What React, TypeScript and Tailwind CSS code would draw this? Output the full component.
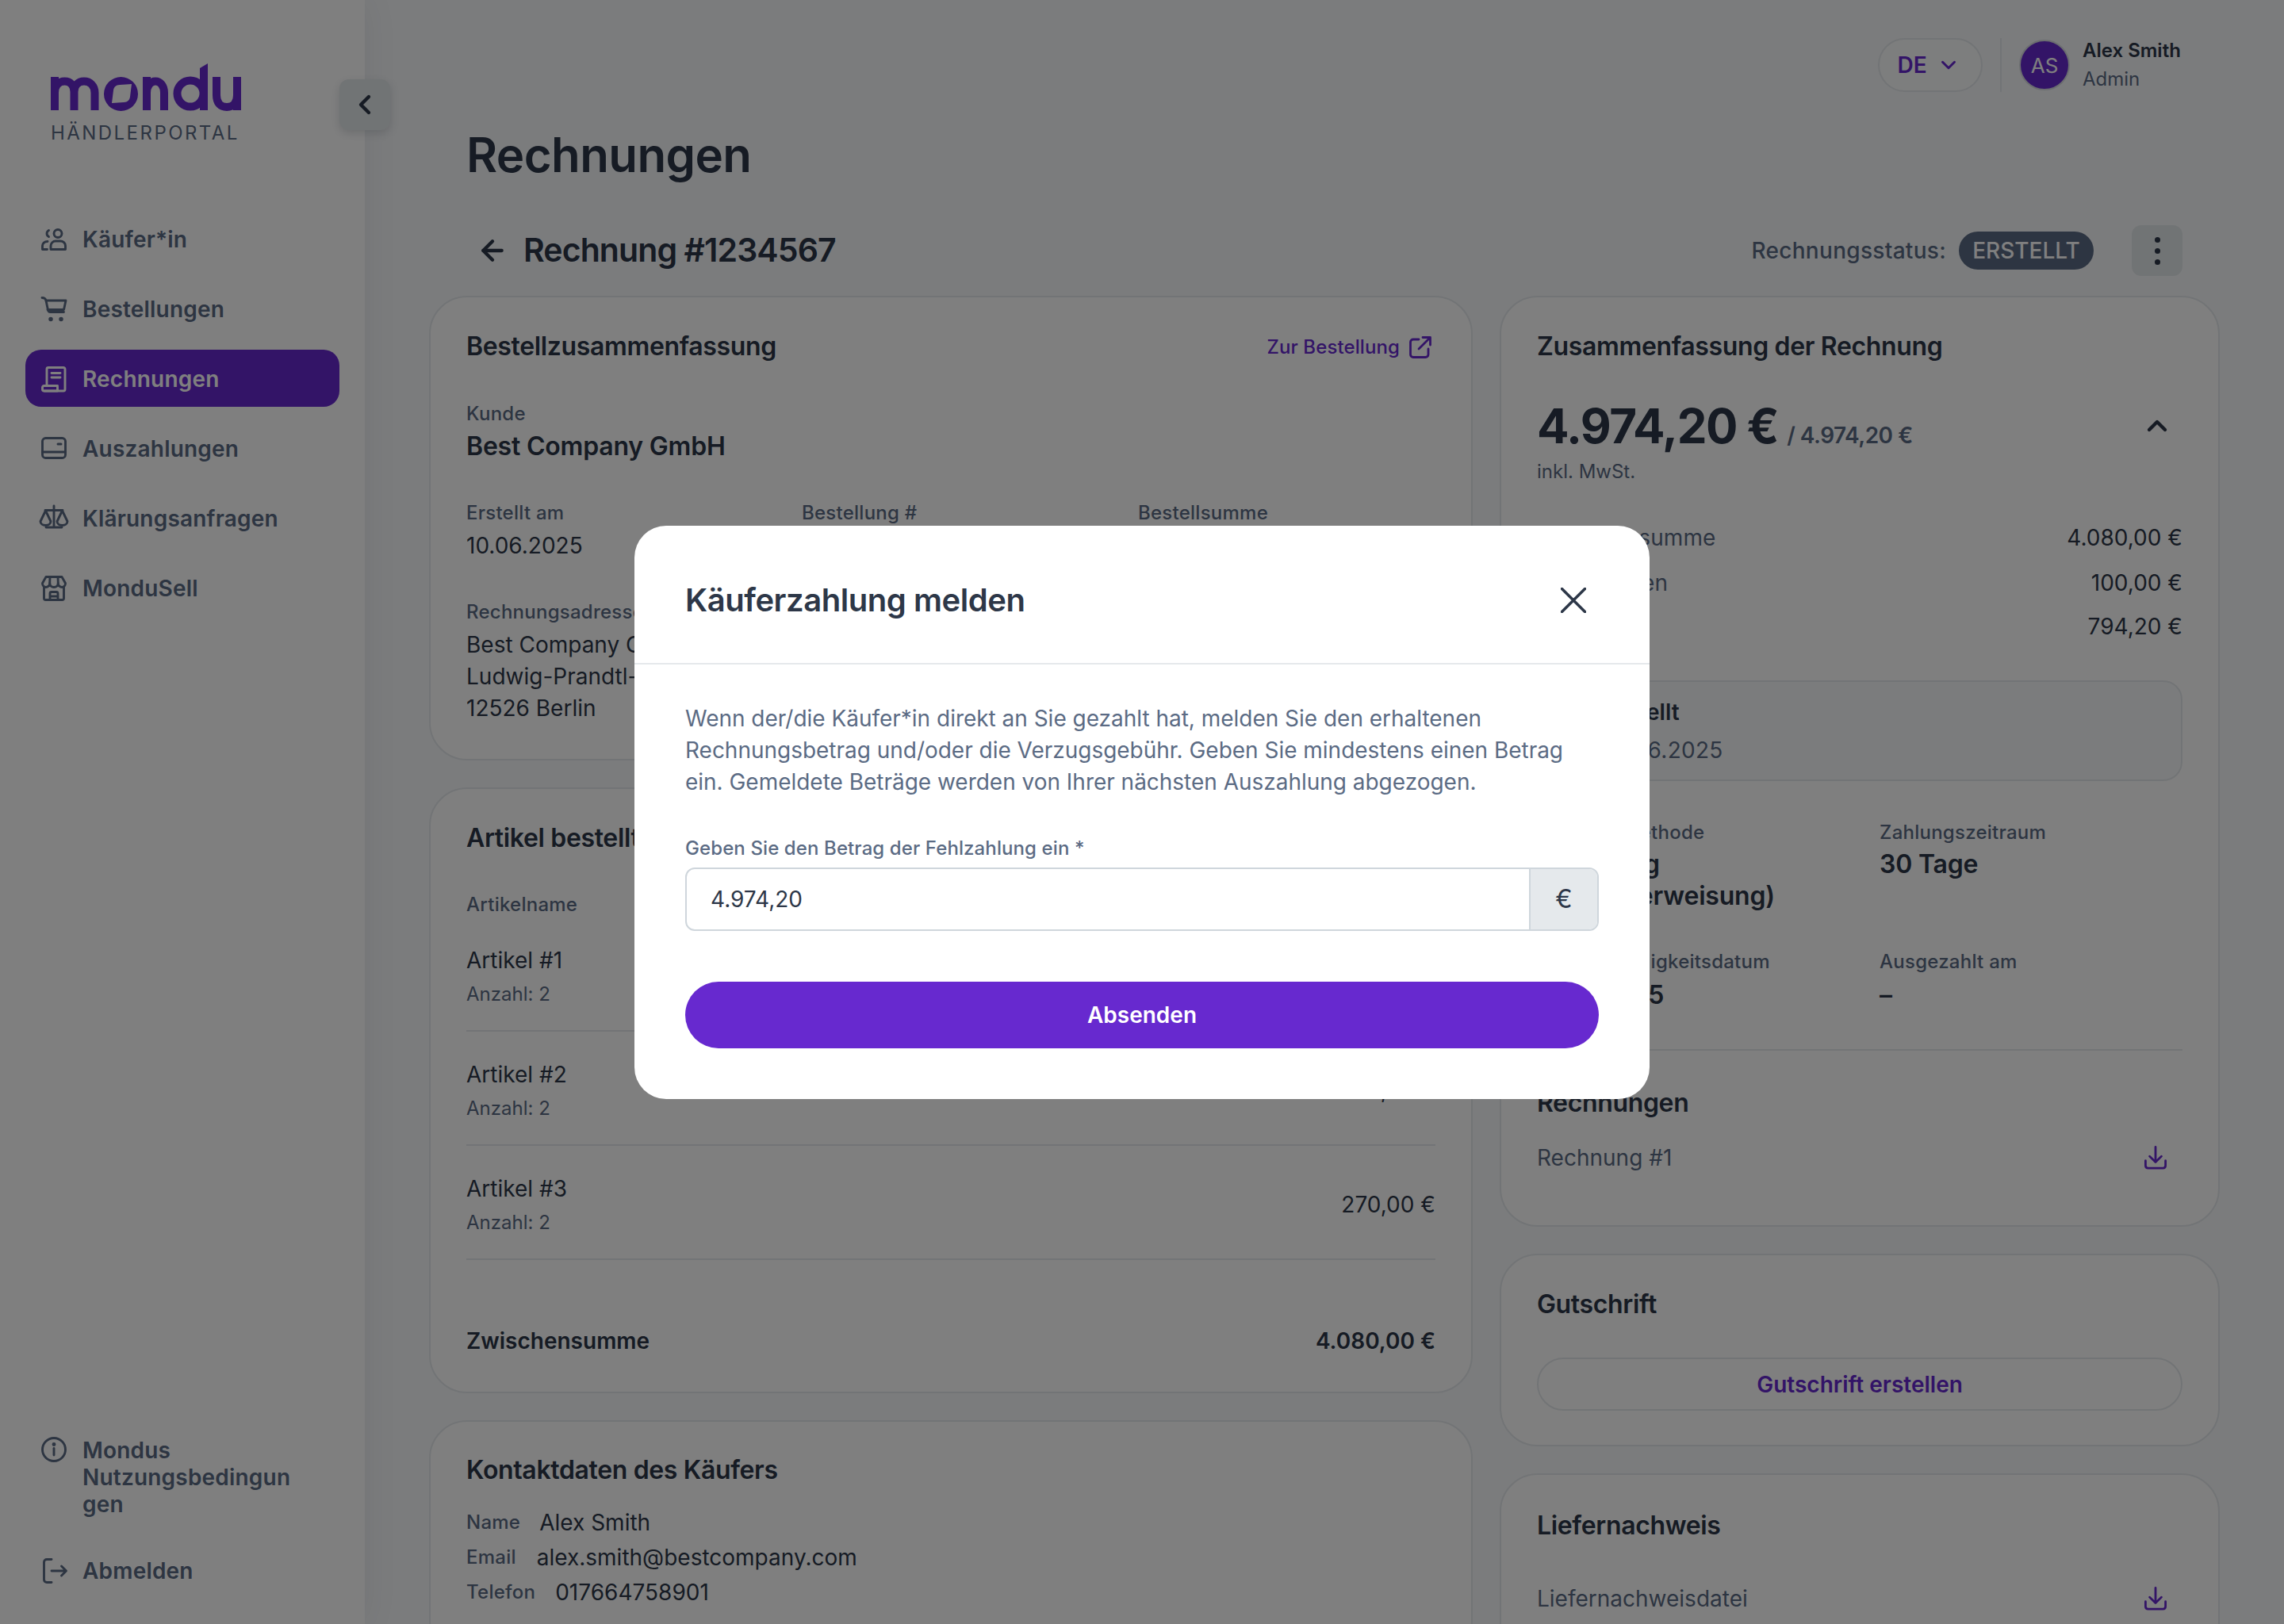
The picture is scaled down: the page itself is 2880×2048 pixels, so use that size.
import { ArrowLeft, ChevronDown, ChevronLeft, ChevronUp } from 'lucide-react'

const ink = 'text-[#2d3748]'
const muted = 'text-[#5b6b84]'
const purple = 'text-[#6729cf]'

function Icon({ children }: { children: React.ReactNode }) {
  return (
    <svg width="32" height="32" viewBox="0 0 32 32" fill="none" stroke="currentColor" strokeWidth="2.9" strokeLinecap="round" strokeLinejoin="round" className="shrink-0 overflow-visible">
      {children}
    </svg>
  )
}

const UsersIcon = () => (
  <Icon>
    <circle cx="21" cy="8.5" r="5" />
    <path d="M9.5 4.5a4.5 4.5 0 0 0 0 8" />
    <path d="M12 28.5v-4.5c0-3.5 3-6 6-6h6c3.5 0 6.5 2.5 6.5 6v4.5z" />
    <path d="M8 18.5c-4 0-6.500 2.500-6.500 5.500v4.500h6" />
  </Icon>
)
const CartIcon = () => (
  <Icon>
    <path d="M1 1.500c3 0 4.500 1 5 3.500l2.500 12c.3 1.500 1.500 2.500 3 2.500h17" />
    <path d="M6 5h25l-2.500 11.500h-20.500" />
    <circle cx="12" cy="28.500" r="1.300" fill="currentColor" />
    <circle cx="25" cy="28.500" r="1.300" fill="currentColor" />
  </Icon>
)
const ReceiptIcon = () => (
  <Icon>
    <path d="M7 24V3.500c0-1 .8-2 2-2h19c1 0 2 1 2 2V29c0 1.200-1 2-2 2H4" />
    <path d="M13 8.500h11M13 14h11" />
    <path d="M3.500 24.500h17v6.500h-17c-1 0-2-.8-2-2v-2.500c0-1 1-2 2-2z" />
  </Icon>
)
const WalletIcon = () => (
  <Icon>
    <rect x="1.500" y="2.500" width="29" height="25" rx="4" />
    <path d="M1.500 20h29" />
    <path d="M21 10h4" strokeWidth="3" />
  </Icon>
)
const ScaleIcon = () => (
  <Icon>
    <path d="M16 0v26M6 27h20M5 5.500h22" />
    <path d="M5.500 6l-6.500 13.500c0 3 3 5 6.500 5s6.500-2 6.500-5z" />
    <path d="M26.500 6l-6.500 13.500c0 3 3 5 6.500 5s6.500-2 6.500-5z" />
  </Icon>
)
const StoreIcon = () => (
  <Icon>
    <path d="M6 1.500h20l4.500 8c0 3-2 5-4.300 5-2.300 0-5-2-5-5 0 3-2.400 5-5.200 5s-5.200-2-5.200-5c0 3-2.700 5-5 5s-4.300-2-4.300-5z" />
    <path d="M11 2l-.3 7.500M21 2l.3 7.500" />
    <path d="M3.500 14v14.500c0 1 .8 2 2 2h21c1.200 0 2-1 2-2V14" />
    <path d="M11 30.500v-8c0-1 .8-2 2-2h6c1.200 0 2 1 2 2v8M11 26h10" />
  </Icon>
)
const InfoIcon = () => (
  <Icon>
    <circle cx="16" cy="16" r="14.500" />
    <path d="M16 14.500v8.500" />
    <circle cx="16" cy="9.500" r="1" fill="currentColor" />
  </Icon>
)
const LogoutIcon = () => (
  <Icon>
    <path d="M13 1.500H7c-2 0-3.500 1.500-3.500 3.500v22c0 2 1.500 3.500 3.500 3.500h6" />
    <path d="M13 16h18M25.500 10l6 6-6 6" />
  </Icon>
)
const DownloadIcon = () => (
  <svg width="28" height="30" viewBox="0 0 30 32" fill="none" stroke="currentColor" strokeWidth="3" strokeLinecap="round" strokeLinejoin="round" className={`shrink-0 ${purple}`}>
    <path d="M15 1.500v20M7 14l8 8 8-8" />
    <path d="M1.500 20v6.500c0 2 1.500 3.500 3.500 3.500h20c2 0 3.500-1.500 3.500-3.500V20" />
  </svg>
)
const ExternalIcon = () => (
  <svg width="28" height="28" viewBox="0 0 28 28" fill="none" stroke="currentColor" strokeWidth="2.800" strokeLinecap="round" strokeLinejoin="round" className="shrink-0">
    <path d="M12 4H5c-2 0-3.500 1.500-3.500 3.500v15.500c0 2 1.500 3.500 3.500 3.500h15.500c2 0 3.500-1.500 3.500-3.500v-7" />
    <path d="M12 16L26 2M17 1.500h9.500V11" />
  </svg>
)

function Logo() {
  return (
    <svg width="240" height="60" viewBox="0 0 240 60" className="text-[#6729cf]" fill="none" stroke="currentColor" strokeWidth="10">
      <path d="M5 59V17M5 37c0-9 5-14.500 12.500-14.500S29.500 28 29.500 36v23M29.500 36c0-8 5-13.500 12.500-13.500S55.500 28 55.500 37v22" />
      <path fill="currentColor" fillRule="evenodd" stroke="none" d="M88.500 17a21.500 21.500 0 1 1 0 43 21.500 21.500 0 1 1 0-43zM77 50l2-16c.6-4 3-7 8-7l15-1-2 16c-.6 4-3 7-8 7z" />
      <path d="M121 59V17M121 37c0-9 5-14.500 11-14.500S143 28 143 37v22" />
      <circle cx="176" cy="38" r="16.500" />
      <path fill="currentColor" stroke="none" d="M188 6l10-6v59h-10z" />
      <path d="M209 17v23c0 10 5 15 13 15s13-5 13-15V17M235 38v21" />
    </svg>
  )
}

function NavItem({ icon, label, active }: { icon: React.ReactNode; label: string; active?: boolean }) {
  return (
    <div className={`flex h-[72px] items-center gap-5 rounded-[20px] pt-[2px] pl-5 text-[28px] font-semibold tracking-[0.2px] ${active ? 'bg-[#6729cf] text-white' : muted}`}>
      {icon}
      <span>{label}</span>
    </div>
  )
}

function Card({ className, children }: { className: string; children: React.ReactNode }) {
  return <section className={`rounded-[48px] border-2 border-[#e5e9ec] bg-white px-[45px] ${className}`}>{children}</section>
}

const CardTitle = ({ children }: { children: React.ReactNode }) => (
  <h2 className={`text-[32px] leading-[44px] font-semibold tracking-[-0.35px] ${ink}`}>{children}</h2>
)
const Label = ({ children, className = '' }: { children: React.ReactNode; className?: string }) => (
  <div className={`text-[24px] leading-[36px] font-medium tracking-[0.25px] ${muted} ${className}`}>{children}</div>
)
const Value = ({ children, className = '' }: { children: React.ReactNode; className?: string }) => (
  <div className={`text-[28px] leading-[40px] ${ink} ${className}`}>{children}</div>
)
const Strong = ({ children, className = '' }: { children: React.ReactNode; className?: string }) => (
  <div className={`text-[32px] leading-[40px] font-semibold tracking-[-0.2px] ${ink} ${className}`}>{children}</div>
)

function ArticleRow({ name, price }: { name: string; price: string }) {
  return (
    <div className="flex h-[144px] items-center justify-between border-b-2 border-[#e5e9ec] pt-[6px]">
      <div>
        <Value>{name}</Value>
        <div className={`mt-[5px] text-[24px] leading-[36px] ${muted}`}>Anzahl: 2</div>
      </div>
      <Value>{price}</Value>
    </div>
  )
}

function SummaryRow({ label, value, className }: { label: string; value: string; className: string }) {
  return (
    <div className={`flex justify-between text-[28px] leading-[40px] ${className}`}>
      <div className={`tracking-[0.1px] ${muted}`}>{label}</div>
      <div className={ink}>{value}</div>
    </div>
  )
}

export default function App() {
  return (
    <div className="relative flex h-[2048px] w-[2880px] overflow-hidden bg-[#f6f8fa] font-['Inter',sans-serif]">
      <aside className="relative z-10 flex w-[460px] shrink-0 flex-col bg-white px-8 pt-20 shadow-[0_0_40px_rgba(45,55,72,0.08)]">
        <div className="ml-8">
          <Logo />
          <div className={`mt-[14px] text-[24px] leading-[28px] tracking-[2.45px] ${muted}`}>HÄNDLERPORTAL</div>
        </div>
        <nav className="mt-[83px] flex flex-col gap-4">
          <NavItem icon={<UsersIcon />} label="Käufer*in" />
          <NavItem icon={<CartIcon />} label="Bestellungen" />
          <NavItem icon={<ReceiptIcon />} label="Rechnungen" active />
          <NavItem icon={<WalletIcon />} label="Auszahlungen" />
          <NavItem icon={<ScaleIcon />} label="Klärungsanfragen" />
          <NavItem icon={<StoreIcon />} label="MonduSell" />
        </nav>
        <div className={`mt-auto mb-[50px] text-[28px] font-semibold tracking-[0.2px] ${muted}`}>
          <div className="flex gap-5 pl-5 leading-[34px]">
            <InfoIcon />
            <span className="w-[270px] break-words">Mondus Nutzungsbedingungen</span>
          </div>
          <div className="mt-[50px] flex items-center gap-5 pl-5 leading-[34px]">
            <LogoutIcon />
            <span>Abmelden</span>
          </div>
        </div>
        <button className="absolute top-[100px] left-[428px] flex h-[64px] w-[64px] items-center justify-center rounded-xl bg-[#e3e8ea] shadow-[0_4px_12px_rgba(45,55,72,0.18)]">
          <ChevronLeft size={40} strokeWidth={2.6} className="text-[#2d3748]" />
        </button>
      </aside>

      <main className="min-w-0 flex-1 pt-12 pr-[81px] pl-[81px]">
        <div className="flex h-[68px] items-center justify-end pr-[49px]">
          <div className="flex h-[68px] w-[132px] items-center justify-center gap-3 rounded-full border-2 border-[#e5e9ec] bg-[#fbfcfc] pr-[4px] text-[28px] font-semibold text-[#6729cf]">
            DE
            <ChevronDown size={30} strokeWidth={2.4} />
          </div>
          <div className="mx-[22px] h-[68px] w-[2px] bg-[#e5e9ec]" />
          <div className="flex h-[64px] w-[64px] items-center justify-center rounded-full border-2 border-[#d6dbe0] bg-[#6729cf] text-[26px] text-white">AS</div>
          <div className="ml-4 w-[124px]">
            <div className={`text-[24px] leading-[36px] font-semibold ${ink}`}>Alex Smith</div>
            <div className={`text-[24px] leading-[36px] ${muted}`}>Admin</div>
          </div>
        </div>

        <h1 className={`mt-[43px] ml-[47px] text-[60px] leading-[72px] font-semibold tracking-[-0.6px] ${ink}`}>Rechnungen</h1>

        <div className="mt-[53px] flex h-[64px] items-center justify-between pr-[47px] pl-[60px]">
          <div className="flex items-center gap-[19px]">
            <ArrowLeft size={40} strokeWidth={2.6} className="text-[#2d3748]" />
            <div className={`text-[41px] font-semibold tracking-[-0.9px] ${ink}`}>Rechnung #1234567</div>
          </div>
          <div className="flex items-center">
            <div className={`text-[28px] font-medium tracking-[0.3px] ${muted}`}>Rechnungsstatus:</div>
            <div className="ml-4 flex h-[48px] w-[170px] items-center justify-center rounded-full bg-[#5b6b84] text-[28px] font-medium text-white">ERSTELLT</div>
            <div className="ml-12 flex h-[64px] w-[64px] flex-col items-center justify-center gap-[7px] rounded-xl bg-[#e3e8ea]">
              <span className="h-[7px] w-[7px] rounded-full bg-[#2d3748]" />
              <span className="h-[7px] w-[7px] rounded-full bg-[#2d3748]" />
              <span className="h-[7px] w-[7px] rounded-full bg-[#2d3748]" />
            </div>
          </div>
        </div>

        <div className="mt-[25px] flex gap-[34px]">
          <div className="flex w-[1316px] shrink-0 flex-col gap-[34px]">
            <Card className="h-[586px] pt-[40px]">
              <div className="flex items-center justify-between">
                <CardTitle>Bestellzusammenfassung</CardTitle>
                <div className={`flex items-center gap-3 pt-[2px] pr-[5px] text-[24px] font-medium tracking-[0.1px] ${purple}`}>
                  Zur Bestellung
                  <ExternalIcon />
                </div>
              </div>
              <Label className="mt-[45px]">Kunde</Label>
              <Strong className="mt-[3px]">Best Company GmbH</Strong>
              <div className="mt-[46px] grid grid-cols-[423px_424px_1fr]">
                <div>
                  <Label>Erstellt am</Label>
                  <Value className="mt-[3px]">10.06.2025</Value>
                </div>
                <div>
                  <Label>Bestellung #</Label>
                  <Value className="mt-[3px]">1234567</Value>
                </div>
                <div>
                  <Label>Bestellsumme</Label>
                  <Value className="mt-[3px]">4.974,20 €</Value>
                </div>
              </div>
              <Label className="mt-[46px]">Rechnungsadresse</Label>
              <div className="mt-[3px]">
                <Value>Best Company GmbH</Value>
                <Value>Ludwig-Prandtl-Straße 1</Value>
                <Value>12526 Berlin</Value>
              </div>
            </Card>

            <Card className="h-[764px] pt-[40px]">
              <CardTitle>Artikel bestellt</CardTitle>
              <Label className="mt-[44px]">Artikelname</Label>
              <div className="-mt-[2px]">
                <ArticleRow name="Artikel #1" price="1.905,00 €" />
                <ArticleRow name="Artikel #2" price="1.905,00 €" />
                <ArticleRow name="Artikel #3" price="270,00 €" />
              </div>
              <div className="mt-[80px] flex items-center justify-between">
                <div className={`text-[28px] leading-[44px] font-semibold ${ink}`}>Zwischensumme</div>
                <div className={`text-[28px] leading-[44px] font-semibold ${ink}`}>4.080,00 €</div>
              </div>
            </Card>

            <Card className="h-[300px] pt-[39px]">
              <CardTitle>Kontaktdaten des Käufers</CardTitle>
              <div className="mt-[22px]">
                <div className="flex h-[44px] items-center gap-[24px]">
                  <Label>Name</Label>
                  <Value>Alex Smith</Value>
                </div>
                <div className="flex h-[44px] items-center gap-[26px]">
                  <Label>Email</Label>
                  <Value>alex.smith@bestcompany.com</Value>
                </div>
                <div className="flex h-[44px] items-center gap-[25px]">
                  <Label>Telefon</Label>
                  <Value>017664758901</Value>
                </div>
              </div>
            </Card>
          </div>

          <div className="flex min-w-0 flex-1 flex-col gap-[34px]">
            <Card className="h-[1174px] pt-[40px]">
              <CardTitle>Zusammenfassung der Rechnung</CardTitle>
              <div className="mt-[38px] flex h-[80px] items-center justify-between">
                <div className="flex items-baseline">
                  <span className={`text-[60px] font-bold tracking-[-1.5px] ${ink}`}>4.974,20 €</span>
                  <span className={`ml-[11px] text-[28px] font-semibold tracking-[-0.5px] ${muted}`}>/ 4.974,20 €</span>
                </div>
                <ChevronUp size={40} strokeWidth={2.6} className="mr-[12px] text-[#2d3748]" />
              </div>
              <div className={`mt-[1px] text-[24px] leading-[34px] ${muted}`}>inkl. MwSt.</div>
              <SummaryRow className="mt-[46px]" label="Zwischensumme" value="4.080,00 €" />
              <SummaryRow className="mt-[17px]" label="Lieferkosten" value="100,00 €" />
              <SummaryRow className="mt-[15px]" label="MwSt." value="794,20 €" />
              <div className="mt-[48px] h-[127px] rounded-[24px] border-2 border-[#e5e9ec] bg-[#f6f8fa] pt-[18px] pl-[83px]">
                <div className={`text-[28px] leading-[40px] font-semibold ${ink}`}>Erstellt</div>
                <div className={`mt-[8px] text-[28px] leading-[40px] tracking-[0.3px] ${muted}`}>10.06.2025</div>
              </div>
              <div className="mt-[47px] grid grid-cols-[432px_1fr]">
                <div>
                  <Label>Zahlungsmethode</Label>
                  <Strong className="mt-[2px]">Rechnung<br />(Banküberweisung)</Strong>
                </div>
                <div>
                  <Label>Zahlungszeitraum</Label>
                  <Strong className="mt-[2px]">30 Tage</Strong>
                </div>
                <div className="mt-[45px]">
                  <Label>Zahlungsfälligkeitsdatum</Label>
                  <div className={`mt-[4px] text-[32px] leading-[40px] font-semibold tracking-[-1px] ${ink}`}>10.07.2025</div>
                </div>
                <div className="mt-[45px]">
                  <Label>Ausgezahlt am</Label>
                  <Strong className="mt-[4px]">–</Strong>
                </div>
              </div>
              <div className="mt-[48px] h-[2px] bg-[#e5e9ec]" />
              <div className="mt-[44px]"><CardTitle>Rechnungen</CardTitle></div>
              <div className="mt-[27px] flex items-center justify-between pr-[20px]">
                <div className={`text-[28px] leading-[40px] ${muted}`}>Rechnung #1</div>
                <DownloadIcon />
              </div>
            </Card>

            <Card className="h-[243px] pt-[40px]">
              <CardTitle>Gutschrift</CardTitle>
              <div className={`mt-[45px] flex h-[67px] items-center justify-center rounded-full border-2 border-[#e5e9ec] text-[28px] font-semibold ${purple}`}>Gutschrift erstellen</div>
            </Card>

            <Card className="h-[300px] pt-[42px]">
              <CardTitle>Liefernachweis</CardTitle>
              <div className="mt-[50px] flex items-center justify-between pr-[20px]">
                <div className={`text-[28px] leading-[40px] ${muted}`}>Liefernachweisdatei</div>
                <DownloadIcon />
              </div>
            </Card>
          </div>
        </div>
      </main>

      <div className="absolute inset-0 z-20 flex items-center justify-center bg-black/50">
        <div className="w-[1280px] rounded-[40px] bg-white">
          <div className="flex h-[175px] items-center justify-between border-b-2 border-[#e5e9ec] px-[64px] pt-[15px]">
            <h2 className={`text-[40px] font-semibold tracking-[-0.45px] ${ink}`}>Käuferzahlung melden</h2>
            <svg width="32" height="32" viewBox="0 0 32 32" fill="none" stroke="#2d3748" strokeWidth="3.500" strokeLinecap="round" className="mr-[16px]">
              <path d="M1.500 1.500l29 29M30.500 1.500l-29 29" />
            </svg>
          </div>
          <div className="px-[64px] pt-[48px] pb-[64px]">
            <p className={`text-[28px] leading-[40px] tracking-[-0.02px] ${muted}`}>
              Wenn der/die Käufer*in direkt an Sie gezahlt hat, melden Sie den erhaltenen Rechnungsbetrag und/oder die Verzugsgebühr. Geben Sie mindestens einen Betrag ein. Gemeldete Beträge werden von Ihrer nächsten Auszahlung abgezogen.
            </p>
            <label className={`mt-[46px] block text-[24px] leading-[36px] font-medium tracking-[0.1px] ${muted}`}>Geben Sie den Betrag der Fehlzahlung ein *</label>
            <div className="mt-[6px] flex h-[80px] overflow-hidden rounded-xl border-2 border-[#cfd6dc]">
              <div className={`flex flex-1 items-center pl-[30px] text-[28px] ${ink}`}>4.974,20</div>
              <div className={`flex w-[86px] items-center justify-center border-l-2 border-[#cfd6dc] bg-[#e5e9ec] text-[32px] ${ink}`}>€</div>
            </div>
            <button className="mt-[64px] h-[84px] w-full rounded-full bg-[#6729cf] text-[28px] font-semibold text-white">Absenden</button>
          </div>
        </div>
      </div>
    </div>
  )
}
